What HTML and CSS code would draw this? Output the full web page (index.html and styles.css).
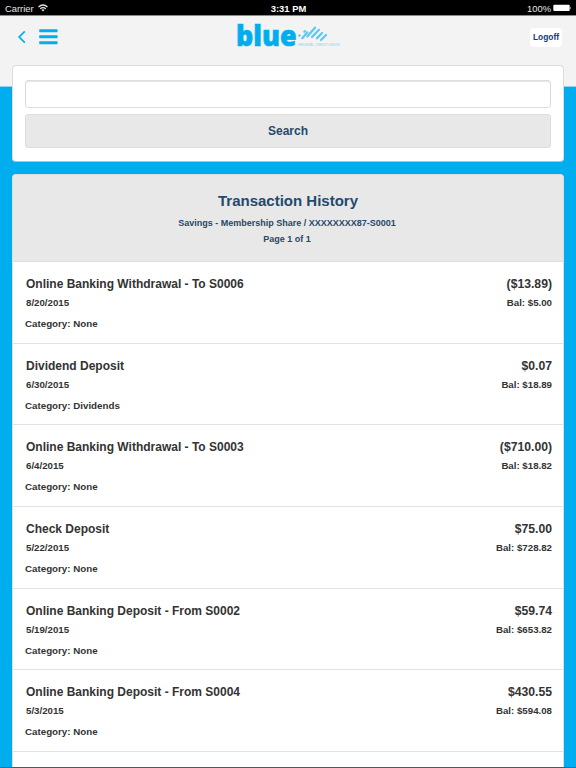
FILE: index.html
```html
<!DOCTYPE html>
<html lang="en">
<head>
    <meta charset="UTF-8">
    <meta name="viewport" content="width=device-width, initial-scale=1.0">
    <title>Transaction History</title>
    <link rel="stylesheet" href="styles.css">
</head>
<body>
    <div class="status-bar">
        <div class="status-left">
            <span>Carrier</span>
            <svg class="wifi" width="10" height="8" viewBox="0 0 10 8" fill="none" stroke="#e6e6e6" stroke-width="1.3">
                <path d="M0.5 2.9Q5 -1 9.5 2.9"/>
                <path d="M2.2 4.7Q5 2.4 7.8 4.7"/>
                <path d="M3.4 5.8Q5 4.6 6.6 5.8L5 7.6Z" fill="#e6e6e6" stroke="none"/>
            </svg>
        </div>
        <div class="status-time">3:31 PM</div>
        <div class="status-right">
            <span>100%</span>
            <svg width="19" height="8" viewBox="0 0 19 8">
                <rect x="0.3" y="0.8" width="16.4" height="6.2" rx="1" fill="#fff"/>
                <path d="M17.3 2.5Q18.8 4 17.3 5.5Z" fill="#fff"/>
            </svg>
        </div>
    </div>

    <header class="header">
        <div class="nav">
            <svg width="8" height="14" viewBox="0 0 8 14" fill="none" stroke="#00aeef" stroke-width="1.7">
                <path d="M6.8 1.4L1.2 7L6.8 12.6"/>
            </svg>
            <svg width="19" height="16" viewBox="0 0 19 16" fill="#00aeef">
                <rect x="0.2" y="0.2" width="18.4" height="3" rx="0.6"/>
                <rect x="0.2" y="6.2" width="18.4" height="3" rx="0.6"/>
                <rect x="0.2" y="12.2" width="18.4" height="3" rx="0.6"/>
            </svg>
        </div>
        <svg class="logo" width="110" height="32" viewBox="0 0 110 32">
            <text class="logo-name" x="1.1" y="24.8" textLength="60.4" lengthAdjust="spacingAndGlyphs">blue</text>
            <g fill="none" stroke="#5cc8f2" stroke-width="2.2" stroke-linecap="round">
                <path d="M64.3 14.6L64.7 14.3"/>
                <path d="M67.3 17.2L72.3 11.3"/>
                <path d="M69.3 10.6L70 10.2"/>
                <path d="M72.3 15.5L80 6.7"/>
                <path d="M77 16L84 8.8"/>
                <path d="M82 17.3L87 12"/>
                <path d="M86 19L91 14"/>
            </g>
            <text class="logo-tagline" x="63.5" y="25" textLength="41" lengthAdjust="spacingAndGlyphs">FEDERAL CREDIT UNION</text>
        </svg>
        <button class="logoff">Logoff</button>
    </header>

    <main class="content">
        <form class="card search">
            <input class="search-input" type="text">
            <button class="search-button" type="button">Search</button>
        </form>

        <section class="card history">
            <div class="history-header">
                <h1>Transaction History</h1>
                <p>Savings - Membership Share / XXXXXXXX87-S0001</p>
                <p>Page 1 of 1</p>
            </div>
            <div class="transaction">
                <div class="line title"><span>Online Banking Withdrawal - To S0006</span><span class="amount">($13.89)</span></div>
                <div class="line detail"><span>8/20/2015</span><span>Bal: $5.00</span></div>
                <div class="category">Category: None</div>
            </div>
            <div class="transaction">
                <div class="line title"><span>Dividend Deposit</span><span class="amount">$0.07</span></div>
                <div class="line detail"><span>6/30/2015</span><span>Bal: $18.89</span></div>
                <div class="category">Category: Dividends</div>
            </div>
            <div class="transaction">
                <div class="line title"><span>Online Banking Withdrawal - To S0003</span><span class="amount">($710.00)</span></div>
                <div class="line detail"><span>6/4/2015</span><span>Bal: $18.82</span></div>
                <div class="category">Category: None</div>
            </div>
            <div class="transaction">
                <div class="line title"><span>Check Deposit</span><span class="amount">$75.00</span></div>
                <div class="line detail"><span>5/22/2015</span><span>Bal: $728.82</span></div>
                <div class="category">Category: None</div>
            </div>
            <div class="transaction">
                <div class="line title"><span>Online Banking Deposit - From S0002</span><span class="amount">$59.74</span></div>
                <div class="line detail"><span>5/19/2015</span><span>Bal: $653.82</span></div>
                <div class="category">Category: None</div>
            </div>
            <div class="transaction">
                <div class="line title"><span>Online Banking Deposit - From S0004</span><span class="amount">$430.55</span></div>
                <div class="line detail"><span>5/3/2015</span><span>Bal: $594.08</span></div>
                <div class="category">Category: None</div>
            </div>
        </section>
    </main>
</body>
</html>
```
FILE: styles.css
```css
* {
    box-sizing: border-box;
}
body {
    display: flex;
    flex-direction: column;
    height: 768px;
    margin: 0;
    overflow: hidden;
    font-family: "Liberation Sans", Arial, sans-serif;
    color: #333;
    background: linear-gradient(#f3f3f3 86px, #8fd3ee 86px, #8fd3ee 87px, #00aeef 87px);
    border-bottom: 1px solid #4b5a61;
}
.status-bar {
    display: grid;
    grid-template-columns: 1fr auto 1fr;
    align-items: center;
    flex: none;
    height: 16px;
    padding: 1px 4px 0 5px;
    background: #000;
    border-bottom: 1px solid #8d8989;
    color: #e6e6e6;
    font-size: 9.4px;
}
.status-left,
.status-right {
    display: flex;
    align-items: center;
    gap: 4px;
}
.status-right {
    justify-content: flex-end;
    gap: 2px;
}
.status-time {
    color: #fff;
    font-weight: bold;
}
.header {
    display: grid;
    grid-template-columns: 1fr auto 1fr;
    align-items: center;
    flex: none;
    height: 49px;
    padding: 0 14px 7px 18px;
}
.nav {
    display: flex;
    align-items: center;
    gap: 13px;
}
.logo {
    overflow: visible;
}
.logo-name {
    font-family: "Open Sans", sans-serif;
    font-size: 27.5px;
    font-weight: 800;
    fill: #00aeef;
    stroke: #00aeef;
    stroke-width: 0.6;
}
.logo-tagline {
    font-size: 4px;
    fill: #7dd2f3;
}
.logoff {
    justify-self: end;
    width: 32px;
    height: 19px;
    padding: 0;
    border: 0;
    border-radius: 4px;
    background: #fff;
    color: #123a7c;
    font-family: inherit;
    font-size: 8.4px;
    font-weight: bold;
}
.content {
    display: flex;
    flex-direction: column;
    gap: 12px;
    flex: 1;
    min-height: 0;
    padding: 0 12px;
}
.card {
    flex: none;
    border: 1px solid #dcdcdc;
    border-radius: 4px;
    background: #fff;
    overflow: hidden;
}
.search {
    display: flex;
    flex-direction: column;
    gap: 6px;
    height: 97px;
    padding: 14px 12px 0;
    border-bottom-color: #9fc8da;
}
.search-input {
    height: 28px;
    border: 1px solid #ddd;
    border-radius: 3px;
    box-shadow: inset 0 1px 1px #e4e4e4;
}
.search-button {
    height: 34px;
    padding: 0;
    border: 1px solid #ddd;
    border-radius: 3px;
    background: #e8e8e8;
    color: #24496b;
    font-family: inherit;
    font-size: 12px;
    font-weight: bold;
}
.history {
    flex: 1;
    min-height: 0;
    border-bottom: 0;
    border-radius: 4px 4px 0 0;
}
.history-header {
    height: 87px;
    padding-top: 16px;
    background: #e8e8e8;
    border-bottom: 1px solid #ddd;
    color: #24496b;
    text-align: center;
    font-weight: bold;
}
.history-header h1 {
    margin: 0 0 4px;
    font-size: 15px;
    line-height: 20px;
}
.history-header p {
    margin: 0;
    padding-right: 2px;
    font-size: 9px;
    line-height: 16px;
}
.transaction {
    height: 81.65px;
    padding: 14px 11px 0 13px;
    border-bottom: 1px solid #e2e2e2;
    font-weight: bold;
}
.line {
    display: flex;
    justify-content: space-between;
}
.title {
    font-size: 12px;
    line-height: 16px;
}
.amount {
    font-size: 12.2px;
}
.detail {
    margin-top: 3px;
    font-size: 9.7px;
    line-height: 16px;
}
.category {
    margin: 5px 0 0 -1px;
    font-size: 9.75px;
    line-height: 16px;
}
```
